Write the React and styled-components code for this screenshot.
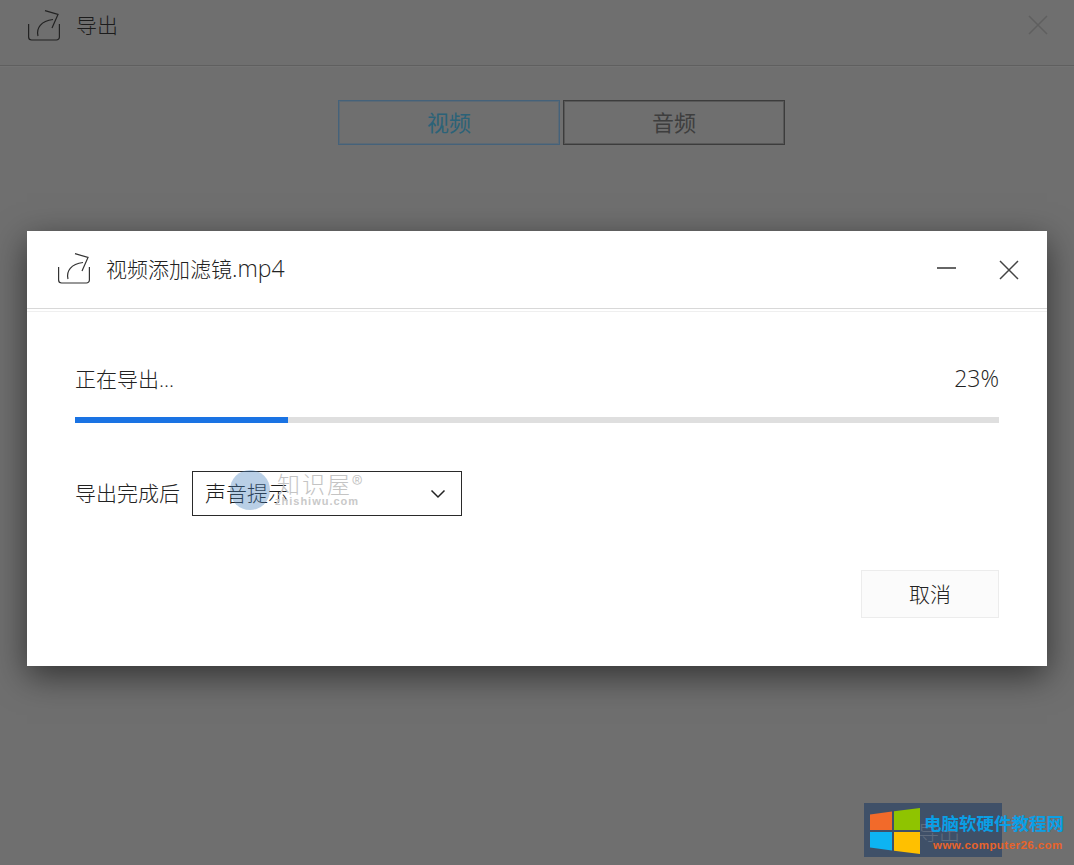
import styled, { createGlobalStyle } from 'styled-components'

const GlobalStyle = createGlobalStyle`
  html, body {
    margin: 0;
    padding: 0;
    background: #6f6f6f;
  }
  * {
    box-sizing: border-box;
  }
`

const FONT = `"Open Sans", "Noto Sans CJK SC", sans-serif`

const Page = styled.div`
  position: relative;
  width: 1074px;
  height: 865px;
  overflow: hidden;
  background: #6f6f6f;
  font-family: ${FONT};
`

const TopBar = styled.div`
  display: flex;
  align-items: center;
  height: 66px;
  padding: 0 26px 15px 28px;
  border-bottom: 1px solid #5f5f5f;
  box-shadow: 0 1px 0 #737373;
`

const TopTitle = styled.span`
  margin-left: 16px;
  padding-bottom: 2px;
  font-size: 21px;
  font-weight: 300;
  color: #1c1c1c;
`

const TopClose = styled.div`
  margin-left: auto;
  display: flex;
`

const Tabs = styled.div`
  display: flex;
  gap: 3px;
  padding: 34px 0 0 338px;
`

const Tab = styled.div`
  display: flex;
  align-items: center;
  justify-content: center;
  width: 222px;
  height: 45px;
  padding-bottom: 3px;
  font-size: 22px;
  font-weight: 400;
  border: 1px solid ${props => (props.$active ? '#45627a' : '#3c3c3c')};
  box-shadow: inset 0 0 0 1px ${props => (props.$active ? 'rgba(69, 98, 122, 0.45)' : 'rgba(60, 60, 60, 0.45)')};
  color: ${props => (props.$active ? '#2b6278' : '#3e3e3e')};
`

const Scrim = styled.div`
  position: absolute;
  inset: 0;
  padding: 231px 27px 0;
`

const Dialog = styled.div`
  position: relative;
  width: 1020px;
  height: 435px;
  background: #fff;
  box-shadow: 0 10px 32px rgba(0, 0, 0, 0.55);
`

const DialogHeader = styled.div`
  display: flex;
  align-items: center;
  height: 78px;
  padding: 0 28px 2px 31px;
  border-bottom: 1px solid #d8d8d8;
  box-shadow: 0 2px 0 #fff, 0 3px 0 #efefef;
`

const DialogTitle = styled.span`
  margin-left: 16px;
  padding-bottom: 2px;
  font-size: 21px;
  font-weight: 300;
  color: #222;
`

const Latin = styled.span`
  font-size: 23px;
`

const WindowButtons = styled.div`
  margin-left: auto;
  display: flex;
  align-items: center;
  gap: 42px;
  margin-top: 2px;
`

const DialogBody = styled.div`
  padding: 55px 48px 0;
`

const ProgressRow = styled.div`
  display: flex;
  justify-content: space-between;
  align-items: center;
  height: 28px;
  font-size: 21px;
  font-weight: 300;
  color: #222;
`

const Track = styled.div`
  height: 6px;
  margin-top: 25px;
  background: #dfdfdf;
`

const Fill = styled.div`
  height: 100%;
  background: #1a73e3;
`

const OptionRow = styled.div`
  display: flex;
  align-items: center;
  margin-top: 48px;
  gap: 12px;
`

const OptionLabel = styled.span`
  padding-bottom: 4px;
  font-size: 21px;
  font-weight: 300;
  color: #222;
`

const Select = styled.div`
  display: flex;
  align-items: center;
  justify-content: space-between;
  width: 270px;
  height: 45px;
  padding: 0 15px 0 12px;
  border: 1px solid #2a2a2a;
  font-size: 21px;
  font-weight: 300;
  color: #1c1c1c;
`

const SelectValue = styled.span`
  padding-bottom: 4px;
`

const Footer = styled.div`
  display: flex;
  justify-content: flex-end;
  margin-top: 54px;
`

const CancelButton = styled.div`
  display: flex;
  align-items: center;
  justify-content: center;
  width: 138px;
  height: 48px;
  padding-bottom: 2px;
  background: #fbfbfb;
  border: 1px solid #ececec;
  font-size: 21px;
  font-weight: 300;
  color: #222;
`

const Watermark = styled.div`
  position: absolute;
  left: 203px;
  top: 239px;
  width: 140px;
  height: 42px;
  pointer-events: none;
`

const WatermarkDot = styled.div`
  position: absolute;
  left: 0;
  top: 0;
  width: 40px;
  height: 40px;
  border-radius: 50%;
  background: rgba(70, 130, 190, 0.38);
`

const WatermarkName = styled.span`
  position: absolute;
  left: 47px;
  top: -1px;
  font-family: "Noto Sans CJK SC", sans-serif;
  font-size: 23px;
  font-weight: 300;
  letter-spacing: 2px;
  line-height: 28px;
  color: #c4c4c4;
  white-space: nowrap;
`

const WatermarkUrl = styled.span`
  position: absolute;
  left: 45px;
  top: 25px;
  font-family: "Liberation Sans", sans-serif;
  font-size: 11px;
  font-weight: 700;
  letter-spacing: 1px;
  color: #c9c9c9;
  white-space: nowrap;
`

const Badge = styled.div`
  position: absolute;
  left: 864px;
  top: 803px;
  width: 138px;
  height: 54px;
  background: #3f5068;
`

const BadgeGhost = styled.span`
  position: absolute;
  left: 54px;
  top: 13px;
  font-size: 21px;
  font-weight: 300;
  color: #5f6c7e;
`

const BadgeLogo = styled.svg`
  position: absolute;
  left: 6px;
  top: 5px;
`

const BadgeTitle = styled.span`
  position: absolute;
  left: 60px;
  top: 8px;
  font-family: "Noto Sans CJK SC", sans-serif;
  font-size: 17.5px;
  font-weight: 700;
  line-height: 24px;
  color: #0a9fe6;
  white-space: nowrap;
`

const BadgeUrl = styled.span`
  position: absolute;
  left: 69px;
  top: 35px;
  font-family: "Liberation Sans", sans-serif;
  font-size: 11.5px;
  font-weight: 700;
  letter-spacing: 0.45px;
  line-height: 14px;
  color: #e8632a;
  white-space: nowrap;
`

function ExportIcon({ color }) {
  return (
    <svg width="32" height="31" viewBox="0 0 32 31" fill="none" stroke={color} strokeWidth="1.2">
      <path d="M0.6 14V27a3 3 0 0 0 3 3h24.8a3 3 0 0 0 3-3V14" />
      <path d="M10 26C8 18 13 11 25 9.5" />
      <path d="M17 0.6L30 4.5L24 18" />
    </svg>
  )
}

function CloseIcon({ color, size }) {
  return (
    <svg width={size} height={size} viewBox="0 0 20 20" stroke={color} strokeWidth="1.5" fill="none">
      <path d="M1 1l18 18M19 1L1 19" />
    </svg>
  )
}

function App() {
  return (
    <>
      <GlobalStyle />
      <Page>
        <TopBar>
          <ExportIcon color="#222" />
          <TopTitle>导出</TopTitle>
          <TopClose>
            <CloseIcon color="#5f5f5f" size={20} />
          </TopClose>
        </TopBar>
        <Tabs>
          <Tab $active>视频</Tab>
          <Tab>音频</Tab>
        </Tabs>

        <Scrim>
          <Dialog>
            <DialogHeader>
              <ExportIcon color="#333" />
              <DialogTitle>视频添加滤镜<Latin>.mp4</Latin></DialogTitle>
              <WindowButtons>
                <svg width="20" height="20" viewBox="0 0 20 20" stroke="#333" strokeWidth="1.5">
                  <path d="M0 8h19" />
                </svg>
                <CloseIcon color="#444" size={20} />
              </WindowButtons>
            </DialogHeader>
            <DialogBody>
              <ProgressRow>
                <span>正在导出...</span>
                <Latin>23%</Latin>
              </ProgressRow>
              <Track>
                <Fill style={{ width: '23%' }} />
              </Track>
              <OptionRow>
                <OptionLabel>导出完成后</OptionLabel>
                <Select>
                  <SelectValue>声音提示</SelectValue>
                  <svg width="16" height="10" viewBox="0 0 16 10" fill="none" stroke="#222" strokeWidth="1.5">
                    <path d="M1.5 1.5L8 8l6.5-6.5" />
                  </svg>
                </Select>
              </OptionRow>
              <Footer>
                <CancelButton>取消</CancelButton>
              </Footer>
            </DialogBody>
            <Watermark>
              <WatermarkDot />
              <WatermarkName>知识屋®</WatermarkName>
              <WatermarkUrl>zhishiwu.com</WatermarkUrl>
            </Watermark>
          </Dialog>
        </Scrim>

        <Badge>
          <BadgeGhost>导出</BadgeGhost>
          <BadgeLogo width="50" height="46" viewBox="0 0 50 46">
            <path d="M0 6.5l22-3V22H0z" fill="#f26a2a" />
            <path d="M24 3.2L50 0v22H24z" fill="#8fc400" />
            <path d="M0 24h22v18.5l-22-3z" fill="#0db4f2" />
            <path d="M24 24h26v22l-26-3.2z" fill="#ffc000" />
          </BadgeLogo>
          <BadgeTitle>电脑软硬件教程网</BadgeTitle>
          <BadgeUrl>www.computer26.com</BadgeUrl>
        </Badge>
      </Page>
    </>
  )
}

export default App
